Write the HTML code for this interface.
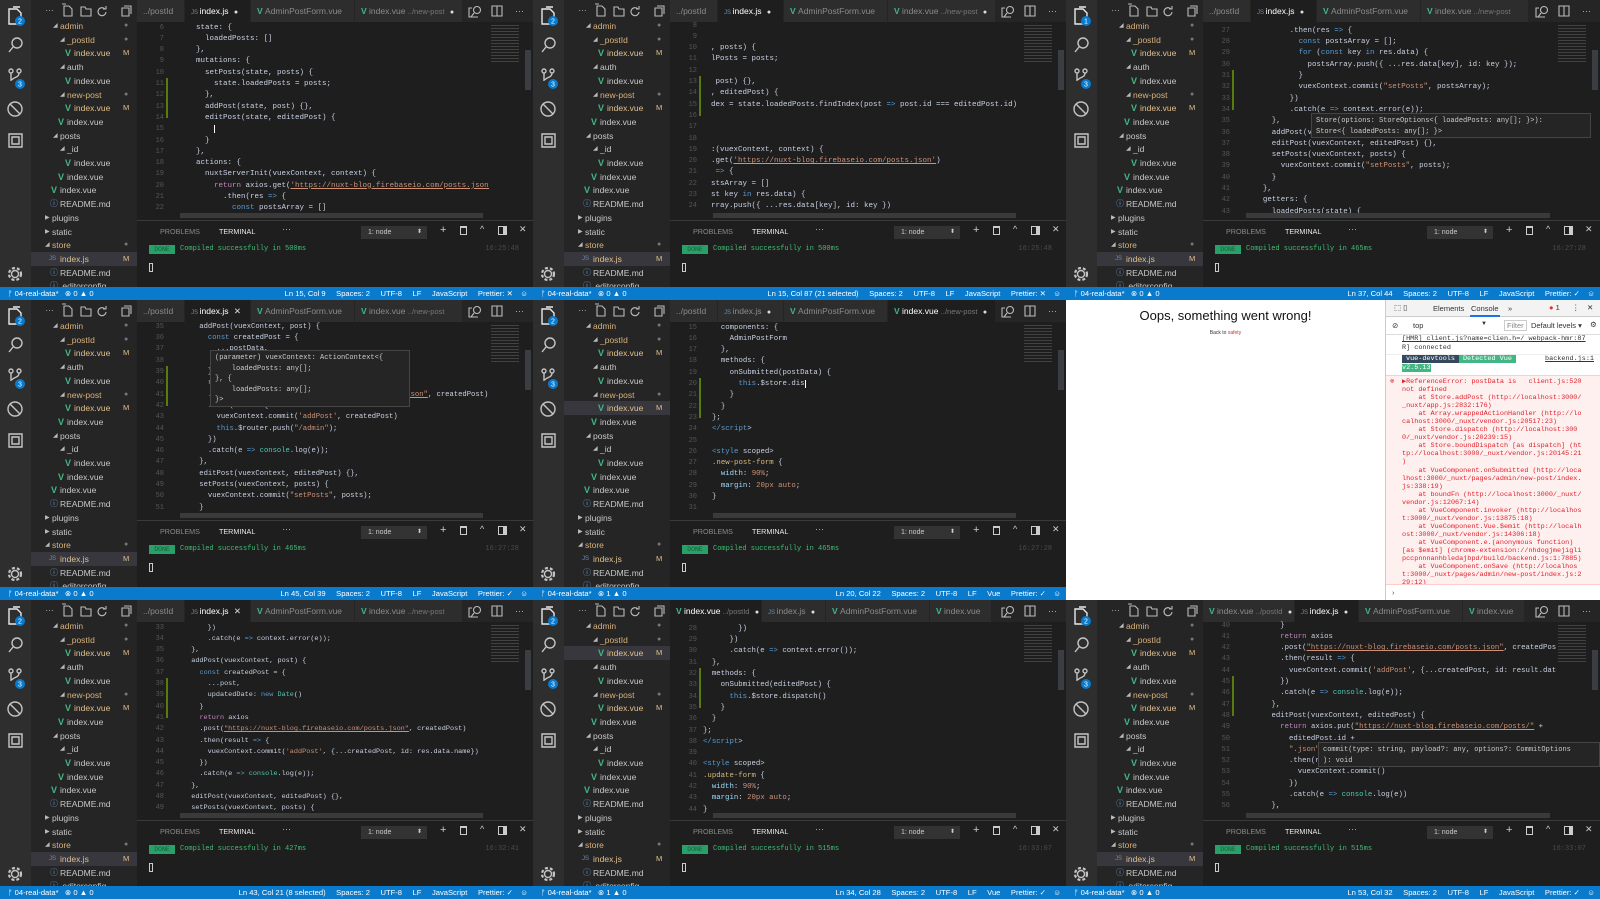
<!DOCTYPE html>
<html><head><meta charset="utf-8">
<style>
*{box-sizing:border-box;margin:0;padding:0}
html,body{width:1600px;height:899px;overflow:hidden;background:#1e1e1e}
.cell{position:absolute;overflow:hidden;background:#1e1e1e;font-family:"Liberation Sans",sans-serif}
.ab{position:absolute;left:0;top:0;width:31px;bottom:13px;background:#2e2e2e}
.sb{position:absolute;left:31px;top:0;width:106px;bottom:13px;background:#252526}
.tabs{position:absolute;left:137px;right:0;top:0;height:22px;background:#252526}
.tab{position:absolute;top:0;height:22px;line-height:22px;font-size:8.5px;color:#8b8b8b;white-space:nowrap;padding-left:6px;background:#2d2d2d;border-right:1px solid #252526;overflow:hidden}
.tab.act{background:#1e1e1e;color:#fff}
.ln{position:absolute;left:137px;width:27px;text-align:right;font-family:"Liberation Mono",monospace;font-size:7px;color:#555;white-space:pre}
.cl{position:absolute;font-family:"Liberation Mono",monospace;color:#c9d1e3;white-space:pre}
.panel{position:absolute;left:137px;right:0;top:220px;bottom:13px;background:#1e1e1e;border-top:1px solid #3a3a3a}
.st{position:absolute;left:0;right:0;bottom:0;height:13px;background:#0a7acc;color:#fff;font-size:7.6px;line-height:13px;white-space:nowrap}
.si{position:absolute;font-size:8.5px;color:#c8c8c8;white-space:nowrap;height:14px;line-height:14px}
.mono{font-family:"Liberation Mono",monospace}
.k{color:#569cd6}.r{color:#c586c0}.s{color:#ce9178}.u{text-decoration:underline}.t{color:#4ec9b0}.g{color:#808080}.c{color:#d7ba7d}.p{color:#9cdcfe}
</style></head><body>
<div id="root"></div>
<script>
var cells=[
{x:0,y:0,w:533,h:300,start:6,y0:28,cx:178,fs:7.5,b1:2,err:0,hl:17,
 tabs:[["../postId","",0,0],["index.js","js",1,1],["AdminPostForm.vue","vue",0,0],["index.vue ../new-post","vue",1,0]],
 st:"Ln 15, Col 9     Spaces: 2     UTF-8     LF     JavaScript     Prettier: ✕",ms:"500ms",tm:"16:25:48",
 lines:["    state: {","      loadedPosts: []","    },","    mutations: {","      setPosts(state, posts) {","        state.loadedPosts = posts;","      },","      addPost(state, post) {},","      editPost(state, editedPost) {","        |","      }","    },","    actions: {","      nuxtServerInit(vuexContext, context) {","        return axios.get('https://nuxt-blog.firebaseio.com/posts.json')","          .then(res => {","            const postsArray = []","            for (const key in res.data) {"]},
{x:533,y:0,w:533,h:300,start:8,y0:26,cx:178,fs:7.5,b1:2,err:0,hl:17,
 tabs:[["../postId","",0,0],["index.js","js",1,1],["AdminPostForm.vue","vue",0,0],["index.vue ../new-post","vue",1,0]],
 st:"Ln 15, Col 87 (21 selected)     Spaces: 2     UTF-8     LF     JavaScript     Prettier: ✕",ms:"500ms",tm:"16:25:48",
 lines:["","",", posts) {","lPosts = posts;",""," post) {},",", editedPost) {","dex = state.loadedPosts.findIndex(post => post.id === editedPost.id)","","","",":(vuexContext, context) {",".get('https://nuxt-blog.firebaseio.com/posts.json')"," => {","stsArray = []","st key in res.data) {","rray.push({ ...res.data[key], id: key })",""]},
{x:1066,y:0,w:534,h:300,start:26,y0:20,cx:179,fs:7.45,b1:1,err:0,hl:17,
 tabs:[["../postId","",0,0],["index.js","js",1,1],["AdminPostForm.vue","vue",0,0],["index.vue ../new-post","vue",0,0]],
 st:"Ln 37, Col 44     Spaces: 2     UTF-8     LF     JavaScript     Prettier: ✓",ms:"465ms",tm:"16:27:28",
 tip:[245,113,280,28,["Store(options: StoreOptions<{ loadedPosts: any[]; }>):","Store<{ loadedPosts: any[]; }>"]],
 lines:["        return axios.get('https://nuxt-blog.firebaseio.com/posts.json')","          .then(res => {","            const postsArray = [];","            for (const key in res.data) {","              postsArray.push({ ...res.data[key], id: key });","            }","            vuexContext.commit(\"setPosts\", postsArray);","          })","          .catch(e => context.error(e));","      },","      addPost(vuexContext, post) {},","      editPost(vuexContext, editedPost) {},","      setPosts(vuexContext, posts) {","        vuexContext.commit(\"setPosts\", posts);","      }","    },","    getters: {","      loadedPosts(state) {"]},
{x:0,y:300,w:533,h:300,start:34,y0:16,cx:182,fs:7.2,b1:2,err:0,hl:17,
 tabs:[["../postId","",0,0],["index.js","js",0,1],["AdminPostForm.vue","vue",0,0],["index.vue ../new-post","vue",0,0]],
 st:"Ln 45, Col 39     Spaces: 2     UTF-8     LF     JavaScript     Prettier: ✓",ms:"465ms",tm:"16:27:28",
 tip:[210,50,200,54,["(parameter) vuexContext: ActionContext<{","    loadedPosts: any[];","}, {","    loadedPosts: any[];","}>"]],
 lines:["    },","    addPost(vuexContext, post) {","      const createdPost = {","        ...postData,","        updatedDate: new Date()","      }","      return axios","      .post(\"https://nuxt-blog.firebaseio.com/posts.json\", createdPost)","      .then(res => {","        vuexContext.commit('addPost', createdPost)","        this.$router.push(\"/admin\");","      })","      .catch(e => console.log(e));","    },","    editPost(vuexContext, editedPost) {},","    setPosts(vuexContext, posts) {","      vuexContext.commit(\"setPosts\", posts);","    }"]},
{x:533,y:300,w:533,h:300,start:15,y0:28,cx:179,fs:7.35,b1:2,err:1,hl:6,
 tabs:[["../postId","",0,0],["index.js","js",1,0],["AdminPostForm.vue","vue",0,0],["index.vue ../new-post","vue",1,1]],
 st:"Ln 20, Col 22     Spaces: 2     UTF-8     LF     Vue     Prettier: ✓",ms:"465ms",tm:"16:27:28",
 lines:["  components: {","    AdminPostForm","  },","  methods: {","    onSubmitted(postData) {","      this.$store.dis|","    }","  }","};","<\/script>","","<style scoped>",".new-post-form {","  width: 90%;","  margin: 20px auto;","}","","@media (min-width: 768px) {"]},
null,
{x:0,y:600,w:533,h:299,start:33,y0:28,cx:183,fs:6.85,b1:2,err:0,hl:17,
 tabs:[["../postId","",0,0],["index.js","js",0,1],["AdminPostForm.vue","vue",0,0],["index.vue ../new-post","vue",0,0]],
 st:"Ln 43, Col 21 (8 selected)     Spaces: 2     UTF-8     LF     JavaScript     Prettier: ✓",ms:"427ms",tm:"16:32:41",
 lines:["      })","      .catch(e => context.error(e));","  },","  addPost(vuexContext, post) {","    const createdPost = {","      ...post,","      updatedDate: new Date()","    }","    return axios","    .post(\"https://nuxt-blog.firebaseio.com/posts.json\", createdPost)","    .then(result => {","      vuexContext.commit('addPost', {...createdPost, id: res.data.name})","    })","    .catch(e => console.log(e));","  },","  editPost(vuexContext, editedPost) {},","  setPosts(vuexContext, posts) {","    vuexContext.commit(\"setPosts\", posts);"]},
{x:533,y:600,w:533,h:299,start:27,y0:18,cx:170,fs:7.35,b1:2,err:1,hl:2,
 tabs:[["index.vue ../postId","vue",1,1],["index.js","js",1,0],["AdminPostForm.vue","vue",0,0],["index.vue","vue",0,0]],
 st:"Ln 34, Col 28     Spaces: 2     UTF-8     LF     Vue     Prettier: ✓",ms:"515ms",tm:"16:33:07",
 lines:["          loadedPosts: res.data","        })","      })","      .catch(e => context.error());","  },","  methods: {","    onSubmitted(editedPost) {","      this.$store.dispatch()","    }","  }","};","<\/script>","","<style scoped>",".update-form {","  width: 90%;","  margin: 20px auto;","}"]},
{x:1066,y:600,w:534,h:299,start:40,y0:26,cx:188,fs:7.3,b1:2,err:0,hl:17,
 tabs:[["index.vue ../postId","vue",1,0],["index.js","js",1,1],["AdminPostForm.vue","vue",0,0],["index.vue","vue",0,0]],
 st:"Ln 53, Col 32     Spaces: 2     UTF-8     LF     JavaScript     Prettier: ✓",ms:"515ms",tm:"16:33:07",
 tip:[252,142,282,24,["commit(type: string, payload?: any, options?: CommitOptions","): void"]],
 lines:["      }","      return axios","      .post(\"https://nuxt-blog.firebaseio.com/posts.json\", createdPost)","      .then(result => {","        vuexContext.commit('addPost', {...createdPost, id: result.data.name})","      })","      .catch(e => console.log(e));","    },","    editPost(vuexContext, editedPost) {","      return axios.put(\"https://nuxt-blog.firebaseio.com/posts/\" +","        editedPost.id +","        \".json\", editedPost)","        .then(res => {","          vuexContext.commit()","        })","        .catch(e => console.log(e))","    },","    setPosts(vuexContext, posts) {"]}
];
function esc(s){return s.replace(/&/g,"&amp;").replace(/</g,"&lt;").replace(/>/g,"&gt;")}
function hl(line){
 var re=/('[^']*'|"[^"]*"|\b(?:const|for|in|new|this)\b|\breturn\b|=>|\b(?:console|Date)\b|<\/?[a-z]+|\.[a-z-]+-form|\b(?:width|margin)\b(?=:)|\d+(?:px|%)|\bauto\b|\|)/g;
 var out="",last=0,m;
 while((m=re.exec(line))){out+=esc(line.slice(last,m.index));var t=m[0],c;
  if(t[0]=="'"||t[0]=='"')c="s"+(t.indexOf("http")>=0?" u":"");
  else if(t=="return")c="r";else if(t=="=>")c="k";else if(t=="console"||t=="Date")c="t";
  else if(t[0]=="<")c="k";else if(t[0]==".")c="c";else if(t=="width"||t=="margin")c="p";
  else if(/\d/.test(t)||t=="auto")c="s";else if(t=="|"){out+='<span style="border-left:1px solid #fff"></span>';last=re.lastIndex;continue}
  else c="k";
  out+='<span class="'+c+'">'+esc(t)+'</span>';last=re.lastIndex}
 return out+esc(line.slice(last));
}
var side=[["admin",1,60,"o",1],["_postId",1,67,"o",1],["index.vue",2,74,"m",0],["auth",1,67,"w",0],["index.vue",2,74,"w",0],["new-post",1,67,"o",1],["index.vue",2,74,"m",0],["index.vue",2,67,"w",0],["posts",1,60,"w",0],["_id",1,67,"w",0],["index.vue",2,74,"w",0],["index.vue",2,67,"w",0],["index.vue",2,60,"w",0],["README.md",3,60,"w",0],["plugins",4,52,"w",0],["static",4,52,"w",0],["store",1,52,"o",1],["index.js",5,60,"m",0],["README.md",3,60,"w",0],[".editorconfig",3,60,"w",0]];
function svgAb(b1){
 return '<svg width="31" height="287" style="position:absolute;left:0;top:0" fill="none" stroke="#c5c5c5" stroke-width="1.4">'+
 '<path d="M9 9h8l4 4v11H9z M13 7h7" stroke="#e8e8e8"/><circle cx="20" cy="21" r="5" fill="#0a7acc" stroke="none"/><text x="20" y="23.5" font-size="7" fill="#fff" stroke="none" text-anchor="middle" font-family="Liberation Sans">'+b1+'</text>'+
 '<circle cx="17" cy="43" r="5"/><path d="M13 47l-4 5"/>'+
 '<circle cx="11" cy="71" r="2"/><circle cx="19" cy="71" r="2"/><path d="M11 73v8 M19 73c0 5-6 4-7 7"/><circle cx="20" cy="84" r="5" fill="#0a7acc" stroke="none"/><text x="20" y="86.5" font-size="7" fill="#fff" stroke="none" text-anchor="middle" font-family="Liberation Sans">3</text>'+
 '<circle cx="15" cy="109" r="7"/><path d="M10 104l10 10"/>'+
 '<path d="M9 134h13v13H9z M12 137h7v7h-7z"/>'+
 '<circle cx="15" cy="274" r="3.5"/><circle cx="15" cy="274" r="6" stroke-dasharray="3 2" stroke-width="2.2"/></svg>';
}
var R=document.getElementById("root"),H="";
cells.forEach(function(c,i){
 if(!c){browser();return}
 var s='<div class="cell" style="left:'+c.x+'px;top:'+c.y+'px;width:'+c.w+'px;height:'+c.h+'px">';
 s+='<div class="ab">'+svgAb(c.b1)+'</div>';
 s+='<div class="sb"><div style="position:absolute;left:14px;top:3px;color:#aaa;font-size:9px">…</div>'+
 '<svg width="100" height="20" style="position:absolute;left:30px;top:2px" fill="none" stroke="#bbb" stroke-width="1.1"><path d="M3 4h5l3 3v7H3z M1 2h4"/><path d="M20 5h4l1 2h5v7H20z"/><path d="M44 7a4 4 0 1 0 1 3 M45 4v3h-3"/><path d="M61 6h7v8h-7z M63 4h7v8"/></svg>';
 side.forEach(function(r,j){var y=19+j*13.7,col=r[3]=="o"?"#d9b27a":r[3]=="m"?"#e2c08d":"#c8c8c8";
  var ico=r[1]==1?'<span style="position:absolute;left:'+(r[2]-38)+'px;font-size:6px;color:#bbb">◢</span>':r[1]==4?'<span style="position:absolute;left:'+(r[2]-38)+'px;font-size:6px;color:#bbb">▶</span>':r[1]==2?'<span style="position:absolute;left:'+(r[2]-40)+'px;color:#41b883;font-weight:bold;font-size:9px">V</span>':r[1]==3?'<span style="position:absolute;left:'+(r[2]-41)+'px;color:#6a9fd4;font-size:8px">ⓘ</span>':'<span style="position:absolute;left:'+(r[2]-42)+'px;color:#6b8db8;font-size:6px">JS</span>';
  s+='<div class="si" style="left:0;width:106px;top:'+y+'px;'+(j==c.hl?'background:#37373d;':'')+'">'+ico+'<span style="position:absolute;left:'+(r[2]-31)+'px;color:'+col+'">'+r[0]+'</span>'+(r[3]=="m"?'<span style="position:absolute;left:92px;color:#e2c08d;font-size:7.5px">M</span>':'')+(r[4]?'<span style="position:absolute;left:93px;color:#777;font-size:7px">●</span>':'')+'</div>'});
 s+='</div>';
 s+='<div class="tabs">';var tw=[48,66,104,108],tx=0;
 c.tabs.forEach(function(t,k){var w=tw[k];if(k==0&&t[0].length>12){w=92}if(k==1&&c.tabs[0][0].length>12){w=64}if(k==3&&c.tabs[0][0].length>12){w=62}
  var ic=t[1]=="js"?'<span style="color:#6b8db8;font-size:6px">JS </span>':t[1]=="vue"?'<span style="color:#41b883;font-weight:bold">V </span>':'';
  s+='<div class="tab'+(t[3]?' act':'')+'" style="left:'+tx+'px;width:'+w+'px">'+ic+t[0].replace(/ (\.\.\/.*)/,' <span style="color:#777;font-size:7.5px">$1</span>')+(t[2]?' <span style="color:#ddd;font-size:7px;margin-left:3px">●</span>':(t[3]?' <span style="color:#ddd;margin-left:3px">✕</span>':''))+'</div>';tx+=w});
 s+='<div style="position:absolute;right:0;top:0;width:68px;height:22px;background:#252526;color:#bbb;font-size:9px;line-height:22px"><svg width="68" height="22" fill="none" stroke="#bbb" stroke-width="1.1"><circle cx="12" cy="10" r="3.5"/><path d="M9 13l-3 4 M7 8h-3v9h9"/><path d="M27 6h10v10H27z M32 6v10"/><text x="50" y="14" fill="#bbb" stroke="none" font-size="9">···</text></svg></div></div>';
 c.lines.forEach(function(l,k){var cy=c.y0+k*11.3;
  if(cy<22||cy>216)return;
  s+='<div class="ln" style="top:'+(cy-5.5)+'px;line-height:11px;height:11px">'+(c.start+k)+'</div>';
  s+='<div class="cl" style="left:'+c.cx+'px;top:'+(cy-5.5)+'px;font-size:'+c.fs+'px;line-height:11px;max-width:'+(c.w-c.cx-44)+'px;overflow:hidden">'+hl(l)+'</div>'});
 s+='<div style="position:absolute;left:166px;top:'+(c.y0+50)+'px;width:2px;height:40px;background:#587c0c"></div>';
 s+='<div style="position:absolute;left:'+(c.w-42)+'px;top:24px;width:28px;height:40px;background:repeating-linear-gradient(#1e1e1e 0 1px,#666 1px 2px,#1e1e1e 2px 3px);opacity:.5"></div>';
 s+='<div style="position:absolute;left:'+(c.w-8)+'px;top:50px;width:6px;height:40px;background:#3a3d41"></div>';
 s+='<div style="position:absolute;left:180px;top:213px;width:'+(c.w-230)+'px;height:5px;background:#3a3a3a"></div>';
 if(c.tip){var t=c.tip;s+='<div style="position:absolute;left:'+t[0]+'px;top:'+t[1]+'px;width:'+t[2]+'px;height:'+(t[4].length*10.5+4)+'px;background:#252526;border:1px solid #454545;padding:2px 4px;font-family:Liberation Mono,monospace;font-size:7px;line-height:10.5px;color:#ccc;white-space:pre;overflow:hidden">'+t[4].map(esc).join("\n")+'</div>'}
 s+='<div class="panel">'+
 '<span style="position:absolute;left:23px;top:6px;font-size:7.2px;color:#8a8a8a">PROBLEMS</span><span style="position:absolute;left:82px;top:6px;font-size:7.2px;color:#e8e8e8">TERMINAL</span><span style="position:absolute;left:145px;top:3px;font-size:9px;color:#bbb">···</span>'+
 '<div style="position:absolute;left:224px;top:5px;width:66px;height:13px;background:#333;color:#ccc;font-size:7px;line-height:13px;padding-left:7px">1: node<span style="position:absolute;right:5px;font-size:6px">⬍</span></div>'+
 '<span style="position:absolute;left:303px;top:3px;font-size:11px;color:#ccc">+</span><span style="position:absolute;left:323px;top:5px;width:7px;height:9px;border:1px solid #ccc;border-top-width:2px"></span><span style="position:absolute;left:343px;top:3px;font-size:9px;color:#ccc">^</span><span style="position:absolute;left:361px;top:5px;width:9px;height:9px;border:1px solid #ccc;border-right-width:4px"></span><span style="position:absolute;left:382px;top:3px;font-size:9px;color:#ccc">✕</span>'+
 '<div class="mono" style="position:absolute;left:12px;top:24px;width:26px;height:9px;background:#26a269;color:#185c3a;font-size:6.5px;line-height:9px;text-align:center">DONE</div>'+
 '<div class="mono" style="position:absolute;left:43px;top:24px;color:#3fbf74;font-size:7px;line-height:9px">Compiled successfully in '+c.ms+'</div>'+
 '<div class="mono" style="position:absolute;right:14px;top:24px;color:#4a4a4a;font-size:7px;line-height:9px">'+c.tm+'</div>'+
 '<div style="position:absolute;left:12px;top:42px;width:4px;height:9px;border:1px solid #ccc"></div></div>';
 s+='<div class="st"><span style="position:absolute;left:8px">ᚠ 04-real-data*&nbsp;&nbsp; ⊗ '+c.err+' ▲ 0</span><span style="position:absolute;right:20px;white-space:pre">'+c.st+'</span><span style="position:absolute;right:5px">☺</span></div>';
 s+='</div>';H+=s;
});
function browser(){
 var err=["▶ReferenceError: postData is   client.js:520","not defined","    at Store.addPost (http://localhost:3000/","_nuxt/app.js:2832:176)","    at Array.wrappedActionHandler (http://lo","calhost:3000/_nuxt/vendor.js:20517:23)","    at Store.dispatch (http://localhost:300","0/_nuxt/vendor.js:20239:15)","    at Store.boundDispatch [as dispatch] (ht","tp://localhost:3000/_nuxt/vendor.js:20145:21",")","    at VueComponent.onSubmitted (http://loca","lhost:3000/_nuxt/pages/admin/new-post/index.","js:338:19)","    at boundFn (http://localhost:3000/_nuxt/","vendor.js:12067:14)","    at VueComponent.invoker (http://localhos","t:3000/_nuxt/vendor.js:13875:18)","    at VueComponent.Vue.$emit (http://localh","ost:3000/_nuxt/vendor.js:14306:18)","    at VueComponent.e.(anonymous function)","[as $emit] (chrome-extension://nhdogjmejigli","pccpnnnanhbledajbpd/build/backend.js:1:7885)","    at VueComponent.onSave (http://localhos","t:3000/_nuxt/pages/admin/new-post/index.js:2","29:12)"];
 var s='<div class="cell" style="left:1066px;top:300px;width:534px;height:300px;background:#fff">'+
 '<div style="position:absolute;left:0;width:319px;top:8px;text-align:center;font-size:13px;color:#111">Oops, something went wrong!</div>'+
 '<div style="position:absolute;left:0;width:319px;top:30px;text-align:center;font-size:5px;color:#333">Back to <span style="color:#c33">safety</span></div>'+
 '<div style="position:absolute;left:319px;top:0;width:215px;height:300px;background:#fff;border-left:1px solid #ccc;font-size:7.5px;color:#333">'+
 '<div style="height:17px;background:#f3f3f3;border-bottom:1px solid #ccc;position:relative"><span style="position:absolute;left:8px;top:3px">⬚ ▯</span><span style="position:absolute;left:47px;top:4px">Elements</span><span style="position:absolute;left:85px;top:4px">Console</span><span style="position:absolute;left:84px;top:15px;width:30px;height:2px;background:#1a73e8"></span><span style="position:absolute;left:122px;top:4px">»</span><span style="position:absolute;left:163px;top:3px;color:#d33">● <span style="color:#333">1</span></span><span style="position:absolute;left:186px;top:3px">⋮</span><span style="position:absolute;left:201px;top:3px">✕</span></div>'+
 '<div style="height:18px;border-bottom:1px solid #ddd;position:relative"><span style="position:absolute;left:6px;top:4px">⊘</span><span style="position:absolute;left:27px;top:4px">top</span><span style="position:absolute;left:95px;top:4px;font-size:6px">▼</span><span style="position:absolute;left:118px;top:3px;border:1px solid #ccc;padding:0 2px;color:#888">Filter</span><span style="position:absolute;left:145px;top:4px">Default levels ▾</span><span style="position:absolute;left:204px;top:3px">⚙</span></div>'+
 '<div class="mono" style="padding-left:16px;font-size:6.8px;line-height:8.5px;height:20px;color:#333;border-bottom:1px solid #eee;white-space:nowrap;overflow:hidden"><span class="u">[HMR] client.js?name=clien.h=/ webpack-hmr:87</span><br>R] connected</div>'+
 '<div class="mono" style="padding-left:16px;font-size:6.8px;line-height:8.5px;height:19px;position:relative"><span style="background:#35495e;color:#fff;padding:0 4px">vue-devtools</span><span style="background:#41b883;color:#fff;padding:0 4px">Detected Vue</span><span class="u" style="position:absolute;right:6px">backend.js:1</span><br><span style="background:#41b883;color:#fff">v2.5.13</span></div>'+
 '<div class="mono" style="position:absolute;top:75px;left:0;right:0;height:210px;background:#fff0f0;border-top:1px solid #fcc;border-bottom:1px solid #fcc;color:#e0202a;font-size:6.8px;line-height:8.05px;padding:2px 0 0 16px;white-space:pre;overflow:hidden"><span style="position:absolute;left:4px;top:2px">⊗</span>'+err.map(esc).join("\n")+'</div>'+
 '<div style="position:absolute;left:6px;top:288px;color:#555">›</div></div></div>';
 H+=s;
}
R.innerHTML=H;
</script>
</body></html>
